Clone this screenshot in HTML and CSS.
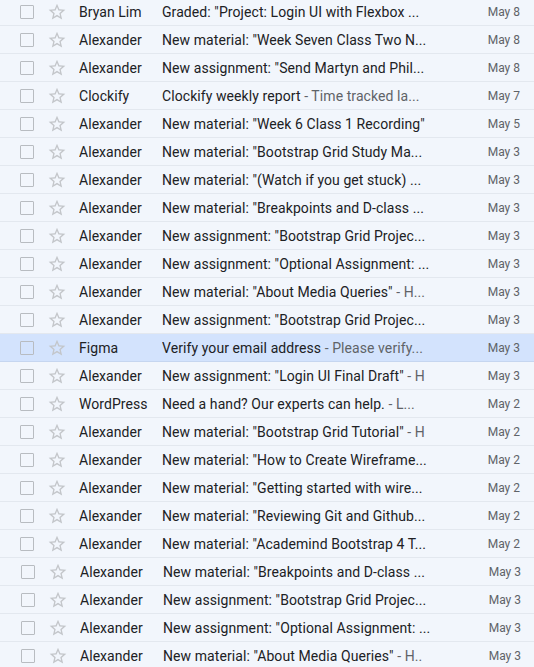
FILE: index.html
```html
<!DOCTYPE html>
<html>
<head>
<meta charset="utf-8">
<link rel="stylesheet" href="styles.css">
</head>
<body>
<div class="list">
  <div class="row"><span class="cb"></span><svg class="star" viewBox="0 0 24 24"><path d="M22 9.24l-7.19-.62L12 2 9.19 8.63 2 9.24l5.46 4.73L5.82 21 12 17.27 18.18 21l-1.63-7.03L22 9.24zM12 15.4l-3.76 2.27 1-4.28-3.32-2.88 4.38-.38L12 6.1l1.71 4.04 4.38.38-3.32 2.88 1 4.28L12 15.4z"/></svg><span class="sender">Bryan Lim</span><span class="subject">Graded: "Project: Login UI with Flexbox ...</span><span class="date">May 8</span></div>
  <div class="row"><span class="cb"></span><svg class="star" viewBox="0 0 24 24"><path d="M22 9.24l-7.19-.62L12 2 9.19 8.63 2 9.24l5.46 4.73L5.82 21 12 17.27 18.18 21l-1.63-7.03L22 9.24zM12 15.4l-3.76 2.27 1-4.28-3.32-2.88 4.38-.38L12 6.1l1.71 4.04 4.38.38-3.32 2.88 1 4.28L12 15.4z"/></svg><span class="sender">Alexander</span><span class="subject">New material: "Week Seven Class Two N...</span><span class="date">May 8</span></div>
  <div class="row"><span class="cb"></span><svg class="star" viewBox="0 0 24 24"><path d="M22 9.24l-7.19-.62L12 2 9.19 8.63 2 9.24l5.46 4.73L5.82 21 12 17.27 18.18 21l-1.63-7.03L22 9.24zM12 15.4l-3.76 2.27 1-4.28-3.32-2.88 4.38-.38L12 6.1l1.71 4.04 4.38.38-3.32 2.88 1 4.28L12 15.4z"/></svg><span class="sender">Alexander</span><span class="subject">New assignment: "Send Martyn and Phil...</span><span class="date">May 8</span></div>
  <div class="row"><span class="cb"></span><svg class="star" viewBox="0 0 24 24"><path d="M22 9.24l-7.19-.62L12 2 9.19 8.63 2 9.24l5.46 4.73L5.82 21 12 17.27 18.18 21l-1.63-7.03L22 9.24zM12 15.4l-3.76 2.27 1-4.28-3.32-2.88 4.38-.38L12 6.1l1.71 4.04 4.38.38-3.32 2.88 1 4.28L12 15.4z"/></svg><span class="sender">Clockify</span><span class="subject">Clockify weekly report <span class="snip">- Time tracked la...</span></span><span class="date">May 7</span></div>
  <div class="row"><span class="cb"></span><svg class="star" viewBox="0 0 24 24"><path d="M22 9.24l-7.19-.62L12 2 9.19 8.63 2 9.24l5.46 4.73L5.82 21 12 17.27 18.18 21l-1.63-7.03L22 9.24zM12 15.4l-3.76 2.27 1-4.28-3.32-2.88 4.38-.38L12 6.1l1.71 4.04 4.38.38-3.32 2.88 1 4.28L12 15.4z"/></svg><span class="sender">Alexander</span><span class="subject">New material: "Week 6 Class 1 Recording"</span><span class="date">May 5</span></div>
  <div class="row"><span class="cb"></span><svg class="star" viewBox="0 0 24 24"><path d="M22 9.24l-7.19-.62L12 2 9.19 8.63 2 9.24l5.46 4.73L5.82 21 12 17.27 18.18 21l-1.63-7.03L22 9.24zM12 15.4l-3.76 2.27 1-4.28-3.32-2.88 4.38-.38L12 6.1l1.71 4.04 4.38.38-3.32 2.88 1 4.28L12 15.4z"/></svg><span class="sender">Alexander</span><span class="subject">New material: "Bootstrap Grid Study Ma...</span><span class="date">May 3</span></div>
  <div class="row"><span class="cb"></span><svg class="star" viewBox="0 0 24 24"><path d="M22 9.24l-7.19-.62L12 2 9.19 8.63 2 9.24l5.46 4.73L5.82 21 12 17.27 18.18 21l-1.63-7.03L22 9.24zM12 15.4l-3.76 2.27 1-4.28-3.32-2.88 4.38-.38L12 6.1l1.71 4.04 4.38.38-3.32 2.88 1 4.28L12 15.4z"/></svg><span class="sender">Alexander</span><span class="subject">New material: "(Watch if you get stuck) ...</span><span class="date">May 3</span></div>
  <div class="row"><span class="cb"></span><svg class="star" viewBox="0 0 24 24"><path d="M22 9.24l-7.19-.62L12 2 9.19 8.63 2 9.24l5.46 4.73L5.82 21 12 17.27 18.18 21l-1.63-7.03L22 9.24zM12 15.4l-3.76 2.27 1-4.28-3.32-2.88 4.38-.38L12 6.1l1.71 4.04 4.38.38-3.32 2.88 1 4.28L12 15.4z"/></svg><span class="sender">Alexander</span><span class="subject">New material: "Breakpoints and D-class ...</span><span class="date">May 3</span></div>
  <div class="row"><span class="cb"></span><svg class="star" viewBox="0 0 24 24"><path d="M22 9.24l-7.19-.62L12 2 9.19 8.63 2 9.24l5.46 4.73L5.82 21 12 17.27 18.18 21l-1.63-7.03L22 9.24zM12 15.4l-3.76 2.27 1-4.28-3.32-2.88 4.38-.38L12 6.1l1.71 4.04 4.38.38-3.32 2.88 1 4.28L12 15.4z"/></svg><span class="sender">Alexander</span><span class="subject">New assignment: "Bootstrap Grid Projec...</span><span class="date">May 3</span></div>
  <div class="row"><span class="cb"></span><svg class="star" viewBox="0 0 24 24"><path d="M22 9.24l-7.19-.62L12 2 9.19 8.63 2 9.24l5.46 4.73L5.82 21 12 17.27 18.18 21l-1.63-7.03L22 9.24zM12 15.4l-3.76 2.27 1-4.28-3.32-2.88 4.38-.38L12 6.1l1.71 4.04 4.38.38-3.32 2.88 1 4.28L12 15.4z"/></svg><span class="sender">Alexander</span><span class="subject">New assignment: "Optional Assignment: ...</span><span class="date">May 3</span></div>
  <div class="row"><span class="cb"></span><svg class="star" viewBox="0 0 24 24"><path d="M22 9.24l-7.19-.62L12 2 9.19 8.63 2 9.24l5.46 4.73L5.82 21 12 17.27 18.18 21l-1.63-7.03L22 9.24zM12 15.4l-3.76 2.27 1-4.28-3.32-2.88 4.38-.38L12 6.1l1.71 4.04 4.38.38-3.32 2.88 1 4.28L12 15.4z"/></svg><span class="sender">Alexander</span><span class="subject">New material: "About Media Queries" <span class="snip">- H...</span></span><span class="date">May 3</span></div>
  <div class="row"><span class="cb"></span><svg class="star" viewBox="0 0 24 24"><path d="M22 9.24l-7.19-.62L12 2 9.19 8.63 2 9.24l5.46 4.73L5.82 21 12 17.27 18.18 21l-1.63-7.03L22 9.24zM12 15.4l-3.76 2.27 1-4.28-3.32-2.88 4.38-.38L12 6.1l1.71 4.04 4.38.38-3.32 2.88 1 4.28L12 15.4z"/></svg><span class="sender">Alexander</span><span class="subject">New assignment: "Bootstrap Grid Projec...</span><span class="date">May 3</span></div>
  <div class="row selected"><span class="cb"></span><svg class="star" viewBox="0 0 24 24"><path d="M22 9.24l-7.19-.62L12 2 9.19 8.63 2 9.24l5.46 4.73L5.82 21 12 17.27 18.18 21l-1.63-7.03L22 9.24zM12 15.4l-3.76 2.27 1-4.28-3.32-2.88 4.38-.38L12 6.1l1.71 4.04 4.38.38-3.32 2.88 1 4.28L12 15.4z"/></svg><span class="sender">Figma</span><span class="subject">Verify your email address <span class="snip">- Please verify...</span></span><span class="date">May 3</span></div>
  <div class="row"><span class="cb"></span><svg class="star" viewBox="0 0 24 24"><path d="M22 9.24l-7.19-.62L12 2 9.19 8.63 2 9.24l5.46 4.73L5.82 21 12 17.27 18.18 21l-1.63-7.03L22 9.24zM12 15.4l-3.76 2.27 1-4.28-3.32-2.88 4.38-.38L12 6.1l1.71 4.04 4.38.38-3.32 2.88 1 4.28L12 15.4z"/></svg><span class="sender">Alexander</span><span class="subject">New assignment: "Login UI Final Draft" <span class="snip">- H</span></span><span class="date">May 3</span></div>
  <div class="row"><span class="cb"></span><svg class="star" viewBox="0 0 24 24"><path d="M22 9.24l-7.19-.62L12 2 9.19 8.63 2 9.24l5.46 4.73L5.82 21 12 17.27 18.18 21l-1.63-7.03L22 9.24zM12 15.4l-3.76 2.27 1-4.28-3.32-2.88 4.38-.38L12 6.1l1.71 4.04 4.38.38-3.32 2.88 1 4.28L12 15.4z"/></svg><span class="sender">WordPress</span><span class="subject">Need a hand? Our experts can help. <span class="snip">- L...</span></span><span class="date">May 2</span></div>
  <div class="row"><span class="cb"></span><svg class="star" viewBox="0 0 24 24"><path d="M22 9.24l-7.19-.62L12 2 9.19 8.63 2 9.24l5.46 4.73L5.82 21 12 17.27 18.18 21l-1.63-7.03L22 9.24zM12 15.4l-3.76 2.27 1-4.28-3.32-2.88 4.38-.38L12 6.1l1.71 4.04 4.38.38-3.32 2.88 1 4.28L12 15.4z"/></svg><span class="sender">Alexander</span><span class="subject">New material: "Bootstrap Grid Tutorial" <span class="snip">- H</span></span><span class="date">May 2</span></div>
  <div class="row"><span class="cb"></span><svg class="star" viewBox="0 0 24 24"><path d="M22 9.24l-7.19-.62L12 2 9.19 8.63 2 9.24l5.46 4.73L5.82 21 12 17.27 18.18 21l-1.63-7.03L22 9.24zM12 15.4l-3.76 2.27 1-4.28-3.32-2.88 4.38-.38L12 6.1l1.71 4.04 4.38.38-3.32 2.88 1 4.28L12 15.4z"/></svg><span class="sender">Alexander</span><span class="subject">New material: "How to Create Wireframe...</span><span class="date">May 2</span></div>
  <div class="row"><span class="cb"></span><svg class="star" viewBox="0 0 24 24"><path d="M22 9.24l-7.19-.62L12 2 9.19 8.63 2 9.24l5.46 4.73L5.82 21 12 17.27 18.18 21l-1.63-7.03L22 9.24zM12 15.4l-3.76 2.27 1-4.28-3.32-2.88 4.38-.38L12 6.1l1.71 4.04 4.38.38-3.32 2.88 1 4.28L12 15.4z"/></svg><span class="sender">Alexander</span><span class="subject">New material: "Getting started with wire...</span><span class="date">May 2</span></div>
  <div class="row"><span class="cb"></span><svg class="star" viewBox="0 0 24 24"><path d="M22 9.24l-7.19-.62L12 2 9.19 8.63 2 9.24l5.46 4.73L5.82 21 12 17.27 18.18 21l-1.63-7.03L22 9.24zM12 15.4l-3.76 2.27 1-4.28-3.32-2.88 4.38-.38L12 6.1l1.71 4.04 4.38.38-3.32 2.88 1 4.28L12 15.4z"/></svg><span class="sender">Alexander</span><span class="subject">New material: "Reviewing Git and Github...</span><span class="date">May 2</span></div>
  <div class="row"><span class="cb"></span><svg class="star" viewBox="0 0 24 24"><path d="M22 9.24l-7.19-.62L12 2 9.19 8.63 2 9.24l5.46 4.73L5.82 21 12 17.27 18.18 21l-1.63-7.03L22 9.24zM12 15.4l-3.76 2.27 1-4.28-3.32-2.88 4.38-.38L12 6.1l1.71 4.04 4.38.38-3.32 2.88 1 4.28L12 15.4z"/></svg><span class="sender">Alexander</span><span class="subject">New material: "Academind Bootstrap 4 T...</span><span class="date">May 2</span></div>
  <div class="row shift"><span class="cb"></span><svg class="star" viewBox="0 0 24 24"><path d="M22 9.24l-7.19-.62L12 2 9.19 8.63 2 9.24l5.46 4.73L5.82 21 12 17.27 18.18 21l-1.63-7.03L22 9.24zM12 15.4l-3.76 2.27 1-4.28-3.32-2.88 4.38-.38L12 6.1l1.71 4.04 4.38.38-3.32 2.88 1 4.28L12 15.4z"/></svg><span class="sender">Alexander</span><span class="subject">New material: "Breakpoints and D-class ...</span><span class="date">May 3</span></div>
  <div class="row shift"><span class="cb"></span><svg class="star" viewBox="0 0 24 24"><path d="M22 9.24l-7.19-.62L12 2 9.19 8.63 2 9.24l5.46 4.73L5.82 21 12 17.27 18.18 21l-1.63-7.03L22 9.24zM12 15.4l-3.76 2.27 1-4.28-3.32-2.88 4.38-.38L12 6.1l1.71 4.04 4.38.38-3.32 2.88 1 4.28L12 15.4z"/></svg><span class="sender">Alexander</span><span class="subject">New assignment: "Bootstrap Grid Projec...</span><span class="date">May 3</span></div>
  <div class="row shift"><span class="cb"></span><svg class="star" viewBox="0 0 24 24"><path d="M22 9.24l-7.19-.62L12 2 9.19 8.63 2 9.24l5.46 4.73L5.82 21 12 17.27 18.18 21l-1.63-7.03L22 9.24zM12 15.4l-3.76 2.27 1-4.28-3.32-2.88 4.38-.38L12 6.1l1.71 4.04 4.38.38-3.32 2.88 1 4.28L12 15.4z"/></svg><span class="sender">Alexander</span><span class="subject">New assignment: "Optional Assignment: ...</span><span class="date">May 3</span></div>
  <div class="row shift"><span class="cb"></span><svg class="star" viewBox="0 0 24 24"><path d="M22 9.24l-7.19-.62L12 2 9.19 8.63 2 9.24l5.46 4.73L5.82 21 12 17.27 18.18 21l-1.63-7.03L22 9.24zM12 15.4l-3.76 2.27 1-4.28-3.32-2.88 4.38-.38L12 6.1l1.71 4.04 4.38.38-3.32 2.88 1 4.28L12 15.4z"/></svg><span class="sender">Alexander</span><span class="subject">New material: "About Media Queries" <span class="snip">- H..</span></span><span class="date">May 3</span></div>
</div>
</body>
</html>
```

FILE: styles.css
```css
html, body {
  margin: 0;
  padding: 0;
  background: #f2f6fc;
  overflow: hidden;
}
.list {
  margin-top: -2px;
  font-family: Roboto, "Liberation Sans", sans-serif;
  font-size: 14px;
  color: #202124;
}
.row {
  display: flex;
  align-items: center;
  height: 27px;
  border-bottom: 1px solid #e3e8ef;
  padding-left: 20px;
  padding-right: 14px;
  background: #f2f6fc;
}
.row.selected {
  background: #d3e3fd;
  border-bottom-color: #c6d6f0;
}
.row.shift {
  padding-left: 21px;
  padding-right: 13px;
}
.cb {
  flex: none;
  width: 12px;
  height: 12px;
  border: 1px solid #b8bcc1;
  border-radius: 1px;
  margin-right: 13px;
}
.star {
  flex: none;
  width: 20px;
  height: 20px;
  fill: #c3c6ca;
  margin-right: 12px;
}
.sender {
  flex: none;
  width: 83px;
  white-space: nowrap;
  overflow: hidden;
  letter-spacing: 0.05px;
}
.subject {
  flex: none;
  width: 268px;
  white-space: nowrap;
  overflow: hidden;
  letter-spacing: 0.08px;
}
.snip {
  color: #5f6368;
}
.date {
  margin-left: auto;
  font-size: 12px;
  color: #5f6368;
  white-space: nowrap;
}
```
